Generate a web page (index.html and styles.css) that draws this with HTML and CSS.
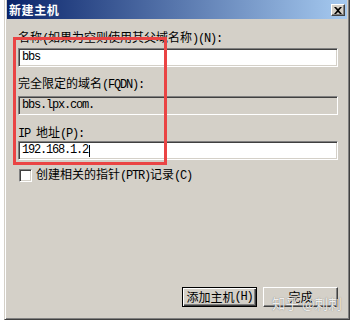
FILE: index.html
```html
<!DOCTYPE html>
<html lang="zh-CN">
<head>
<meta charset="utf-8">
<title>新建主机</title>
<link rel="stylesheet" href="styles.css">
</head>
<body>
<div class="window">
  <div class="titlebar">
    <span class="title">新建主机</span>
    <span class="close">
      <svg width="8" height="7" viewBox="0 0 8 7"><path d="M0 0h2l2 2 2-2h2L5 3.5 8 7H6L4 5 2 7H0l3-3.5z" fill="#000"/></svg>
    </span>
  </div>
  <div class="content">
    <div class="label l1">名称<span class="h">(</span>如果为空则使用其父域名称<span class="h">)(N):</span></div>
    <div class="field f1"><span class="h">bbs</span></div>
    <div class="label l2">完全限定的域名<span class="h">(FQDN):</span></div>
    <div class="field ro f2"><span class="h">bbs.lpx.com.</span></div>
    <div class="label l3"><span class="h">IP </span>地址<span class="h">(P):</span></div>
    <div class="field f3"><span class="h">192.168.1.2</span><span class="caret"></span></div>
    <div class="check">
      <span class="box"></span>
      <span class="ctext">创建相关的指针<span class="h">(PTR)</span>记录<span class="h">(C)</span></span>
    </div>
    <div class="buttons">
      <div class="btn default"><span class="inner">添加主机<span class="h">(H)</span></span></div>
      <div class="btn"><span class="inner">完成</span></div>
    </div>
  </div>
  <div class="highlight"></div>
  <div class="watermark">知乎 @刺刺</div>
</div>
</body>
</html>
```
FILE: styles.css
```css
html, body {
  margin: 0;
  padding: 0;
  background: #ffffff;
}
body {
  width: 354px;
  height: 323px;
  overflow: hidden;
  font-family: "Noto Sans CJK SC", "Liberation Sans", sans-serif;
  font-size: 12px;
  color: #000;
}
.h {
  font-family: "Liberation Mono", monospace;
  font-size: 12px;
  letter-spacing: -1.2px;
}
.window {
  position: relative;
  margin-left: 4px;
  width: 346px;
  height: 320px;
  box-sizing: border-box;
  background: #d4d0c8;
  border-left: 1px solid #d4d0c8;
  border-right: 1px solid #404040;
  border-bottom: 1px solid #404040;
  box-shadow: inset 1px 0 0 #ffffff, inset -1px -1px 0 #808080;
  padding: 0 2px 2px 2px;
  display: flex;
  flex-direction: column;
}
.titlebar {
  height: 19px;
  background: linear-gradient(to right, #0a246a, #a6caf0);
  display: flex;
  align-items: center;
  justify-content: space-between;
  padding: 0 2px 0 2px;
}
.title {
  color: #fff;
  font-weight: bold;
  font-size: 12px;
  letter-spacing: 0.6px;
  line-height: 19px;
}
.close {
  width: 14px;
  height: 12px;
  box-sizing: border-box;
  background: #d4d0c8;
  border: 1px solid;
  border-color: #ffffff #404040 #404040 #ffffff;
  box-shadow: inset -1px -1px 0 #808080;
  display: flex;
  align-items: center;
  justify-content: center;
  margin-top: 1px;
}
.close svg { display: block; }
.content {
  padding: 0 9px 0 11px;
  display: flex;
  flex-direction: column;
}
.label {
  height: 14px;
  line-height: 14px;
  white-space: nowrap;
}
.l1 { margin-top: 11px; }
.l2 { margin-top: 9px; }
.l3 { margin-top: 10px; }
.field {
  height: 19px;
  box-sizing: border-box;
  background: #ffffff;
  border: 1px solid;
  border-color: #808080 #ffffff #ffffff #808080;
  box-shadow: inset 1px 1px 0 #404040, inset -1px -1px 0 #d4d0c8;
  padding: 0 3px;
  line-height: 17px;
  display: flex;
  align-items: center;
  white-space: nowrap;
}
.f1 { margin-top: 4px; }
.f2 { margin-top: 6px; }
.f3 { margin-top: 2px; }
.ro { background: #d4d0c8; }
.caret {
  display: inline-block;
  width: 1px;
  height: 12px;
  background: #000;
  margin-left: 1px;
}
.check {
  margin-top: 8px;
  height: 14px;
  display: flex;
  align-items: center;
  gap: 4px;
  padding-left: 1px;
}
.box {
  width: 13px;
  height: 13px;
  box-sizing: border-box;
  background: #fff;
  border: 1px solid;
  border-color: #808080 #ffffff #ffffff #808080;
  box-shadow: inset 1px 1px 0 #404040, inset -1px -1px 0 #d4d0c8;
}
.ctext { line-height: 14px; white-space: nowrap; }
.buttons {
  margin-top: 105px;
  display: flex;
  justify-content: flex-end;
  gap: 6px;
}
.btn {
  width: 75px;
  height: 20px;
  box-sizing: border-box;
  background: #d4d0c8;
  border: 1px solid;
  border-color: #ffffff #404040 #404040 #ffffff;
  box-shadow: inset -1px -1px 0 #808080;
  display: flex;
}
.btn .inner {
  flex: 1;
  display: flex;
  align-items: center;
  justify-content: center;
  white-space: nowrap;
  line-height: 14px;
}
.btn.default {
  border: 1px solid #000;
  box-shadow: inset 1px 1px 0 #ffffff, inset -1px -1px 0 #404040, inset -2px -2px 0 #808080;
}
.highlight {
  position: absolute;
  left: 8px;
  top: 37px;
  width: 154px;
  height: 128px;
  box-sizing: border-box;
  border: 3px solid #ea4444;
  pointer-events: none;
}
.watermark {
  position: absolute;
  left: 267px;
  top: 295px;
  font-size: 13.5px;
  line-height: 16px;
  color: rgba(255, 255, 255, 0.9);
  text-shadow: 0 0 1px rgba(0, 0, 0, 0.5);
  white-space: nowrap;
}
```
